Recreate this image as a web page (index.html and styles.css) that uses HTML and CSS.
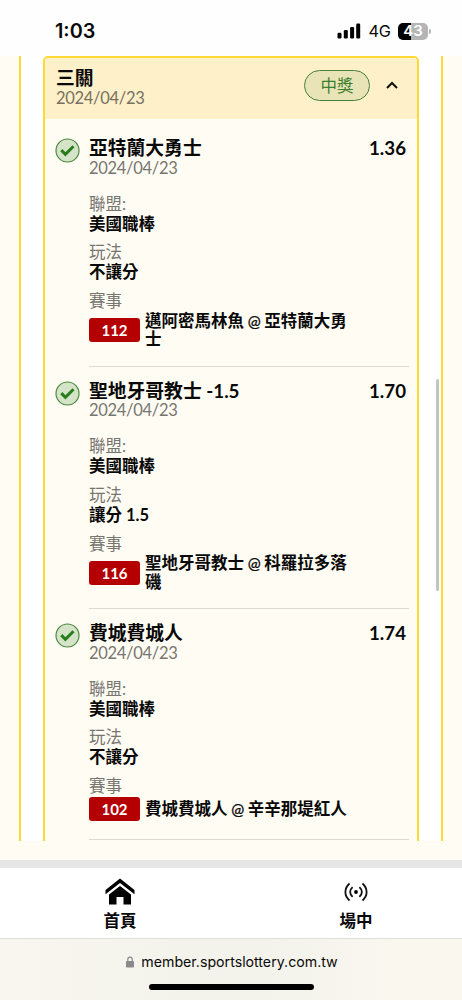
FILE: index.html
```html
<!DOCTYPE html>
<html lang="zh-Hant">
<head>
<meta charset="utf-8">
<meta name="viewport" content="width=device-width, initial-scale=1">
<title>投注紀錄</title>
<link rel="stylesheet" href="styles.css">
</head>
<body>
<div class="phone">
  <header class="status-bar">
    <span class="clock">1:03</span>
    <div class="status-right">
      <svg class="signal" viewBox="0 0 24 16"><rect x="0.5" y="9.7" width="4" height="5.8" rx="1.2"/><rect x="6.8" y="7" width="4" height="8.500" rx="1.2"/><rect x="13.100" y="4" width="4" height="11.500" rx="1.2"/><rect x="19.200" y="0.500" width="4" height="15" rx="1.2"/></svg>
      <span class="network">4G</span>
      <span class="battery"><span class="battery-level">43</span></span><span class="battery-tip"></span>
    </div>
  </header>

  <main class="page">
    <div class="panel">
      <section class="card">
        <div class="card-head">
          <div>
            <h1 class="card-title">三關</h1>
            <p class="date">2024/04/23</p>
          </div>
          <div class="card-state">
            <span class="won">中獎</span>
            <svg class="chevron" viewBox="0 0 12 8"><path d="M1 7 6 2l5 5"/></svg>
          </div>
        </div>
        <div class="entries">
          <article class="entry">
            <svg class="check" viewBox="0 0 25 25"><circle cx="12.500" cy="12.500" r="11.500"/><path d="m6.300 12.100 4.100 4.200 8.100-8"/></svg>
            <div class="entry-body">
              <div class="pick"><h2>亞特蘭大勇士</h2><b class="odds">1.36</b></div>
              <p class="date">2024/04/23</p>
              <dl>
                <dt>聯盟:</dt><dd>美國職棒</dd>
                <dt>玩法</dt><dd>不讓分</dd>
                <dt>賽事</dt>
              </dl>
              <div class="game"><span class="game-no">112</span><span class="teams">邁阿密馬林魚 <i>@</i> 亞特蘭大勇士</span></div>
            </div>
          </article>
          <article class="entry">
            <svg class="check" viewBox="0 0 25 25"><circle cx="12.500" cy="12.500" r="11.500"/><path d="m6.300 12.100 4.100 4.200 8.100-8"/></svg>
            <div class="entry-body">
              <div class="pick"><h2>聖地牙哥教士 -1.5</h2><b class="odds">1.70</b></div>
              <p class="date">2024/04/23</p>
              <dl>
                <dt>聯盟:</dt><dd>美國職棒</dd>
                <dt>玩法</dt><dd>讓分 1.5</dd>
                <dt>賽事</dt>
              </dl>
              <div class="game"><span class="game-no">116</span><span class="teams">聖地牙哥教士 <i>@</i> 科羅拉多落磯</span></div>
            </div>
          </article>
          <article class="entry">
            <svg class="check" viewBox="0 0 25 25"><circle cx="12.500" cy="12.500" r="11.500"/><path d="m6.300 12.100 4.100 4.200 8.100-8"/></svg>
            <div class="entry-body">
              <div class="pick"><h2>費城費城人</h2><b class="odds">1.74</b></div>
              <p class="date">2024/04/23</p>
              <dl>
                <dt>聯盟:</dt><dd>美國職棒</dd>
                <dt>玩法</dt><dd>不讓分</dd>
                <dt>賽事</dt>
              </dl>
              <div class="game"><span class="game-no">102</span><span class="teams">費城費城人 <i>@</i> 辛辛那堤紅人</span></div>
            </div>
          </article>
        </div>
      </section>
    </div>
    <div class="scroll-thumb"></div>
  </main>

  <nav class="tabs">
    <a class="tab">
      <svg class="home" viewBox="0 0 30 27"><path d="M15 0.500 29.500 12v4.200L15 5 0.500 16.200V12z"/><path d="M15 8 26 16.500V26.500H18.500V19h-7v7.500H4V16.500z"/></svg>
      <span>首頁</span>
    </a>
    <a class="tab">
      <svg class="live" viewBox="0 0 24 20"><circle cx="12" cy="10" r="1.900"/><path d="M5.500 1.500C0 6.500 0 13.500 5.500 18.500M18.500 1.500c5.500 5 5.500 12 0 17M8.600 5.200c-3.300 3-3.300 6.600 0 9.600M15.400 5.200c3.300 3 3.300 6.600 0 9.600"/></svg>
      <span>場中</span>
    </a>
  </nav>

  <footer class="browser-bar">
    <div class="address">
      <svg class="lock" viewBox="0 0 8 12"><path class="shackle" d="M1.800 6V3.300a2.200 2.200 0 0 1 4.400 0V6"/><rect x="0" y="5" width="8" height="6.500" rx="1"/></svg>
      <span>member.sportslottery.com.tw</span>
    </div>
    <div class="home-indicator"></div>
  </footer>
</div>
</body>
</html>
```

FILE: styles.css
```css
* { box-sizing: border-box; }
body, h1, h2, p, dl, dt, dd { margin: 0; }
body {
  font-family: Lato, "Noto Sans CJK TC", sans-serif;
  font-size: 16.5px;
  line-height: 20px;
  color: #090909;
  background: #fffcf3;
}
.phone {
  width: 462px;
  height: 1000px;
  display: flex;
  flex-direction: column;
  overflow: hidden;
}

.status-bar {
  height: 56px;
  flex: none;
  padding: 6px 31px 0 55px;
  display: flex;
  align-items: center;
  justify-content: space-between;
  background: #fefefe;
  font-family: Inter, sans-serif;
}
.clock { font-size: 19.800px; font-weight: 600; }
.status-right { display: flex; align-items: center; }
.signal { width: 24px; height: 16px; margin-right: 7px; }
.network { font-size: 16.300px; letter-spacing: -0.3px; margin-right: 7.500px; }
.battery {
  width: 30px;
  height: 17px;
  border-radius: 5px;
  background: linear-gradient(90deg, #000 43%, #b5b5b5 43%);
  display: flex;
  align-items: center;
  justify-content: center;
}
.battery-level { color: #fff; font-size: 15px; font-weight: 600; }
.battery-tip { width: 2px; height: 5px; margin-left: 1px; border-radius: 0 2px 2px 0; background: #b5b5b5; }

.page {
  height: 804px;
  flex: none;
  position: relative;
  padding: 0 19px 19px;
}
.panel {
  height: 785px;
  border: solid #fdd936;
  border-width: 0 2px;
  padding: 0 22px;
  background: #fff;
  overflow: hidden;
}
.card {
  height: 800px;
  border: 2px solid #fdd936;
  border-radius: 5px;
  background: #fffcf3;
  overflow: hidden;
}
.card-head {
  height: 61px;
  padding: 0 19px 1px 11px;
  display: flex;
  align-items: center;
  justify-content: space-between;
  background: #fef0c8;
}
.card-title, .pick h2 { font-size: 18.800px; line-height: 20.500px; font-weight: 700; }
.card-title { line-height: 20px; }
.date { font-size: 16.500px; letter-spacing: -0.3px; color: #777570; }
.card-head .date { color: #777062; }
.card-state { display: flex; align-items: center; gap: 16px; margin-top: -5px; }
.won {
  width: 66px;
  height: 31px;
  border: 1px solid #47803a;
  border-radius: 16px;
  background: #e8e4b8;
  color: #3c7f2d;
  line-height: 30px;
  text-align: center;
}
.chevron { width: 12px; height: 8px; margin-top: -2px; fill: none; stroke: #111; stroke-width: 2; }

.entries { padding: 5px 8px 0 10px; }
.entry { display: flex; align-items: flex-start; gap: 9px; }
.check { width: 25px; height: 25px; flex: none; margin-top: 14px; }
.check circle { fill: #d5e4c9; stroke: #4c8a40; stroke-width: 1.200; }
.check path { fill: none; stroke: #287d1b; stroke-width: 3; }
.entry-body { flex: 1; padding: 14px 0 17px; border-bottom: 1px solid #dedbd5; }
.pick { display: flex; justify-content: space-between; padding-right: 3px; }
.odds { font-size: 18.700px; line-height: 20.500px; }
.entry-body .date { line-height: 18.500px; }
dl { padding-top: 16.500px; }
dt { color: #777570; height: 20px; }
dd { height: 20px; margin-bottom: 8.800px; font-weight: 700; }
.game { display: flex; align-items: center; gap: 5px; padding-right: 55px; padding-top: 0.500px; }
.game-no {
  width: 51px;
  height: 24px;
  flex: none;
  border-radius: 3px;
  background: #b50002;
  color: #fff;
  font-size: 15px;
  font-weight: 700;
  line-height: 24px;
  text-align: center;
}
.entry:last-child .game { padding-bottom: 1px; }
.teams { line-height: 18.500px; font-weight: 700; word-spacing: -0.4px; }
.teams i { font-style: normal; font-weight: 400; font-size: 15.500px; line-height: 1; -webkit-text-stroke: 0.3px #090909; }
.scroll-thumb {
  position: absolute;
  top: 323px;
  left: 436px;
  width: 3px;
  height: 212px;
  border-radius: 2px;
  background: #c3c3c3;
}

.tabs {
  height: 79px;
  flex: none;
  border-top: 8px solid #e6e6e6;
  border-bottom: 1px solid #dedede;
  background: #fff;
  display: grid;
  grid-template-columns: 240px 232px;
}
.tab { display: flex; flex-direction: column; align-items: center; font-weight: 700; padding-top: 10px; }
.home { width: 30px; height: 27px; margin-bottom: 6px; }
.live { width: 24px; height: 20px; margin: 4px 0 9px; }
.live path { fill: none; stroke: #111; stroke-width: 1.800; }

.browser-bar {
  flex: 1;
  background: linear-gradient(90deg, #f8f6ef, #f3f2eb 45%, #f4f3ec 65%, #faf7ef 85%);
  display: flex;
  flex-direction: column;
  align-items: center;
  padding-top: 13px;
}
.address { display: flex; align-items: center; gap: 7px; font-family: Inter, sans-serif; font-size: 14.200px; padding-left: 2px; }
.lock { width: 8px; height: 12px; fill: #8a8a8a; }
.shackle { fill: none; stroke: #8a8a8a; stroke-width: 1.200; }
.home-indicator { width: 165px; height: 6px; border-radius: 3px; background: #000; margin-top: 12px; }
```
